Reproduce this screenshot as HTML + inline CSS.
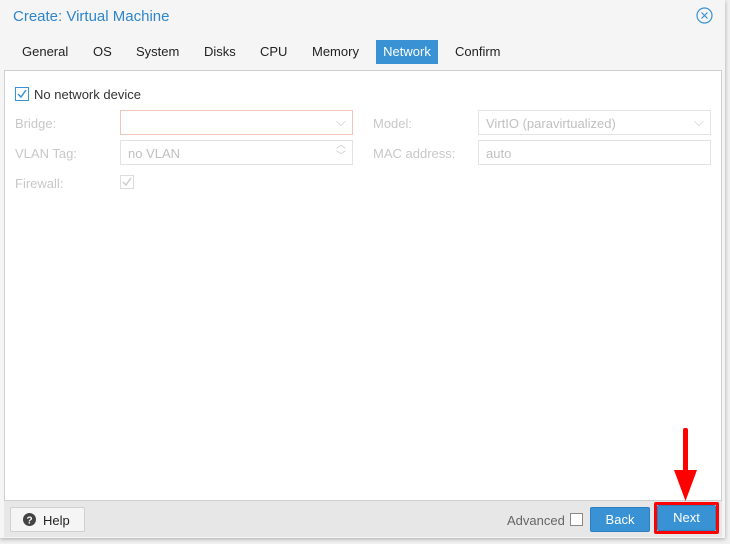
<!DOCTYPE html>
<html><head><style>
*{box-sizing:border-box;margin:0;padding:0}
body{width:730px;height:544px;background:#f0f0f0;font-family:"Liberation Sans",sans-serif;font-size:13px;position:relative;overflow:hidden}
.a{position:absolute}
.dlg{left:0;top:0;width:725px;height:538px;background:#f5f5f5;box-shadow:0 1px 4px rgba(0,0,0,.3)}
.lbl{color:#c8c8c8}
.inp{border:1px solid #e3e3e3;height:25px;color:#c0c0c0;padding:5px 7px;background:#fff}
.tab{top:40px;height:24px;line-height:24px;color:#222;font-size:13px}
.btn{height:25px;line-height:23px;text-align:center;color:#fff;background:#3892d4;border:1px solid #2f7fbf;border-radius:2px}
</style></head><body>
<div class="a dlg"></div>
<div class="a" style="left:13px;top:8px;font-size:15px;color:#2f86cc">Create: Virtual Machine</div>
<svg class="a" style="left:696px;top:7px" width="17" height="17" viewBox="0 0 17 17"><circle cx="8.5" cy="8.5" r="7.5" fill="none" stroke="#3892d4" stroke-width="1.2"/><path d="M5.5 5.5l6 6M11.5 5.5l-6 6" stroke="#3892d4" stroke-width="1.2"/></svg>
<div class="a tab" style="left:22px">General</div>
<div class="a tab" style="left:93px">OS</div>
<div class="a tab" style="left:136px">System</div>
<div class="a tab" style="left:204px">Disks</div>
<div class="a tab" style="left:260px">CPU</div>
<div class="a tab" style="left:312px">Memory</div>
<div class="a tab" style="left:376px;width:62px;background:#3892d4;color:#fff;text-align:center">Network</div>
<div class="a tab" style="left:455px">Confirm</div>
<div class="a" style="left:4px;top:70px;width:718px;height:431px;background:#fff;border:1px solid #cfcfcf"></div>
<svg class="a" style="left:15px;top:87px" width="14" height="14"><rect x=".5" y=".5" width="13" height="13" fill="#fff" stroke="#3892d4"/><path d="M3 7l3 3 5-7" fill="none" stroke="#3892d4" stroke-width="1.5"/></svg>
<div class="a" style="left:34px;top:87px;color:#333">No network device</div>
<div class="a lbl" style="left:15px;top:116px">Bridge:</div>
<div class="a inp" style="left:120px;top:110px;width:233px;border-color:#f0c4b8"></div>
<div class="a lbl" style="left:336px;top:114px">⌵</div>
<div class="a lbl" style="left:373px;top:116px">Model:</div>
<div class="a inp" style="left:478px;top:110px;width:233px">VirtIO (paravirtualized)</div>
<div class="a lbl" style="left:694px;top:114px">⌵</div>
<div class="a lbl" style="left:15px;top:146px">VLAN Tag:</div>
<div class="a inp" style="left:120px;top:140px;width:233px">no VLAN</div>
<div class="a lbl" style="left:336px;top:140px;font-size:10px;line-height:11px">︿<br>﹀</div>
<div class="a lbl" style="left:373px;top:146px">MAC address:</div>
<div class="a inp" style="left:478px;top:140px;width:233px">auto</div>
<div class="a lbl" style="left:15px;top:176px">Firewall:</div>
<svg class="a" style="left:120px;top:175px" width="14" height="14"><rect x=".5" y=".5" width="13" height="13" fill="#fff" stroke="#ddd"/><path d="M3 7l3 3 5-7" fill="none" stroke="#ccc" stroke-width="1.4"/></svg>
<div class="a" style="left:4px;top:501px;width:718px;height:36px;background:#e7e7e7"></div>
<div class="a" style="left:10px;top:507px;width:75px;height:25px;background:#f5f5f5;border:1px solid #d0d0d0;border-radius:2px"></div>
<svg class="a" style="left:23px;top:513px" width="13" height="13"><circle cx="6.5" cy="6.5" r="6.5" fill="#444"/><text x="6.5" y="10.5" font-size="10" font-weight="bold" fill="#fff" text-anchor="middle" font-family="Liberation Sans">?</text></svg>
<div class="a" style="left:43px;top:513px;color:#222">Help</div>
<div class="a" style="left:507px;top:513px;color:#666">Advanced</div>
<div class="a" style="left:570px;top:513px;width:13px;height:13px;background:#fff;border:1px solid #888"></div>
<div class="a btn" style="left:590px;top:507px;width:60px">Back</div>
<div class="a" style="left:654px;top:502px;width:65px;height:32px;border:3px solid #f00;border-radius:2px"></div>
<div class="a btn" style="left:657px;top:505px;width:59px;height:26px">Next</div>
<div class="a" style="left:683px;top:428px;width:5px;height:45px;background:#f00;border-radius:2px"></div>
<svg class="a" style="left:674px;top:470px" width="23" height="32"><path d="M0 0h23L11.5 31z" fill="#f00"/></svg>
</body></html>
